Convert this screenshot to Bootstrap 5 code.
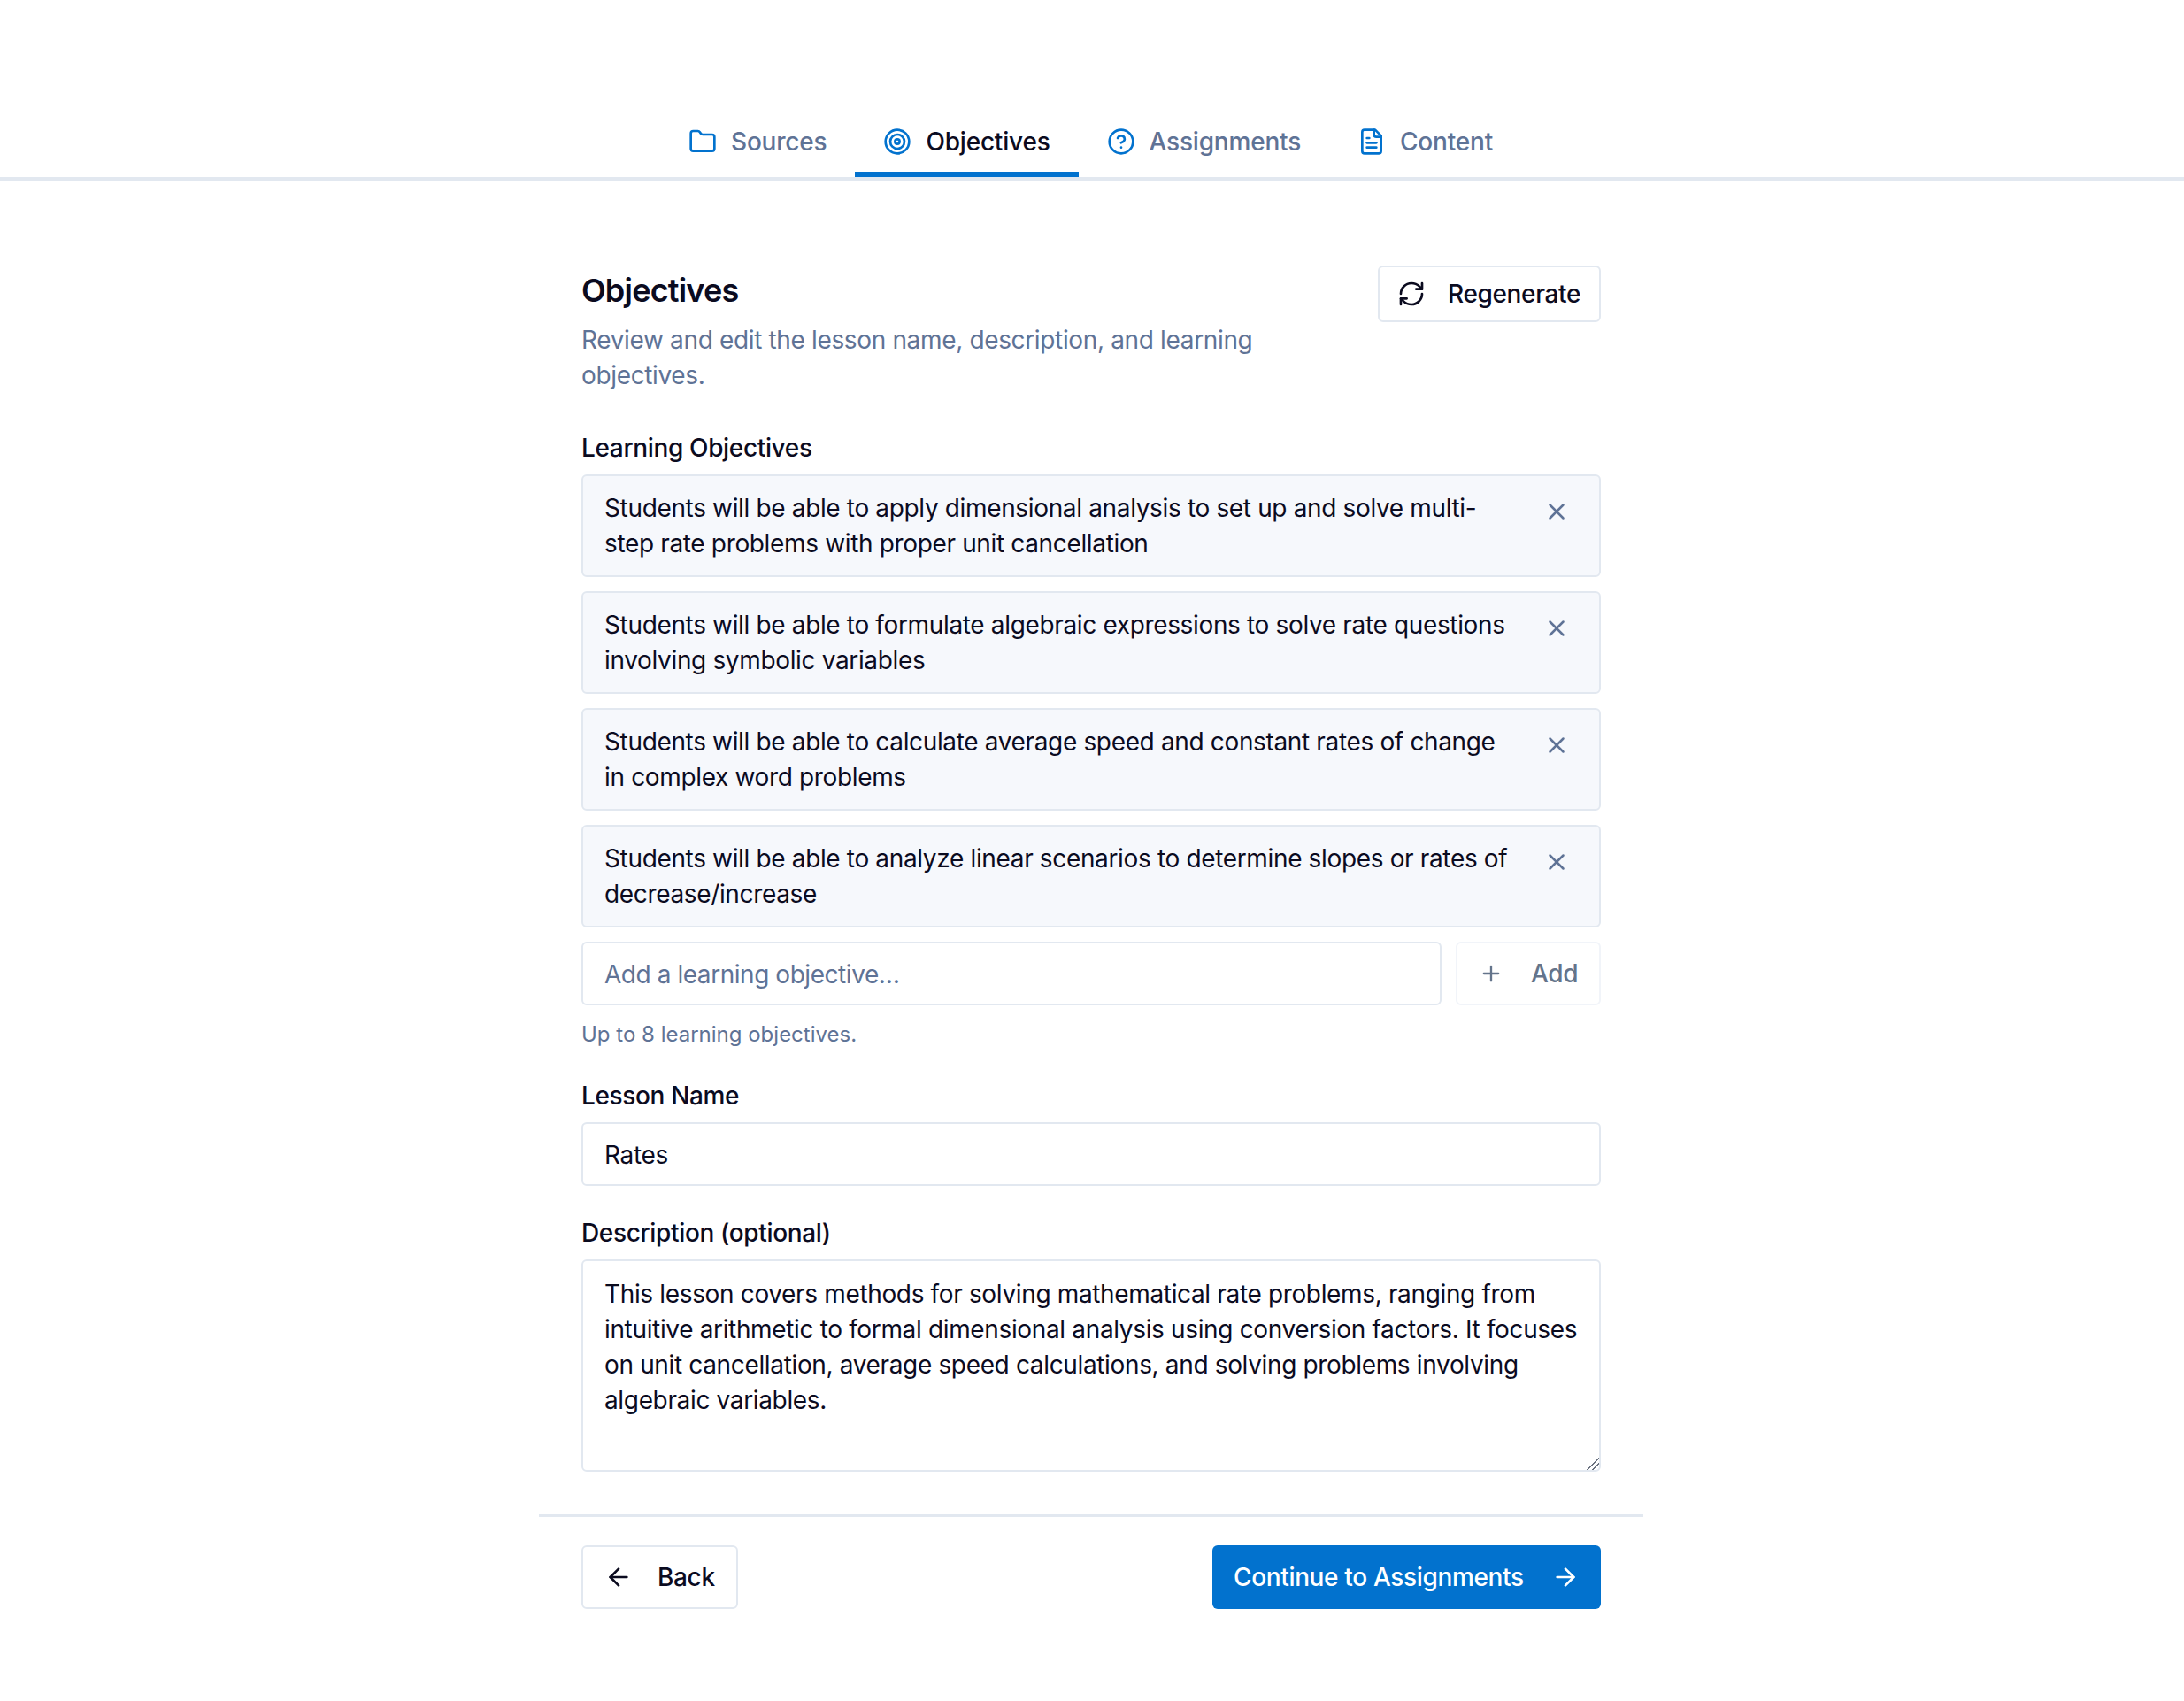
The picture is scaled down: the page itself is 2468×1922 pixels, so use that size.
<!DOCTYPE html>
<html lang="en">
<head>
  <meta charset="UTF-8">
  <title>Objectives</title>
  <meta name="viewport" content="width=device-width, initial-scale=1">
  <link href="https://cdn.jsdelivr.net/npm/bootstrap@5.3.3/dist/css/bootstrap.min.css" rel="stylesheet">
  <style>
    body {
      background: #fff;
      color: #0b0b1f;
      font-family: Inter, "Liberation Sans", sans-serif;
      font-size: 28px;
      line-height: 40px;
    }
    body, button, input, textarea { letter-spacing: -0.35px; }
    svg { fill: none; stroke: currentColor; stroke-width: 2; stroke-linecap: round; stroke-linejoin: round; flex-shrink: 0; }
    .tab-bar {
      margin-top: 120px;
      border-bottom: 4px solid #e2e8f0;
      height: 84px;
      padding-right: 3px;
    }
    .tab-item {
      color: #5f7396;
      padding: 20px 32px 0;
      height: 80px;
      gap: 16px;
      border-bottom: 6px solid transparent;
      font-weight: 500;
      letter-spacing: -0.2px;
      text-decoration: none;
    }
    .tab-item svg { color: #0272ce; width: 32px; height: 32px; margin-top: 4px; }
    .tab-item.on { color: #0b0b1f; border-bottom-color: #0272ce; }
    .page-body { width: 1248px; margin: 0 0 0 609px; padding: 96px 48px 0; }
    .page-title { font-size: 36px; line-height: 48px; font-weight: 600; letter-spacing: -0.8px; margin: 0 0 12px; padding-top: 4px; }
    .page-sub { color: #5f7396; width: 800px; margin: 0 0 42px; }
    .plain-btn {
      font-size: 28px;
      line-height: 40px;
      font-weight: 500;
      color: #0b0b1f;
      background: #fff;
      border: 2px solid #e2e8f0;
      border-radius: 6px;
      gap: 24px;
    }
    .regen-btn { height: 64px; padding: 0 20px; width: 252px; gap: 25px; }
    .regen-btn svg { width: 32px; height: 32px; }
    .field-label { font-weight: 500; display: block; margin: 0 0 10px; }
    .field-label.below { margin-top: 33px; margin-bottom: 10px; }
    .objective-row {
      background: #f6f8fc;
      border: 2px solid #e2e8f0;
      border-radius: 6px;
      padding: 16px 24px;
      gap: 24px;
    }
    .objective-row span { flex: 1; }
    .del-btn { color: #5f7396; background: none; border: 0; padding: 0; width: 48px; height: 48px; }
    .del-btn svg { width: 30px; height: 30px; }
    .form-control.text-field {
      font-size: 28px;
      line-height: 40px;
      color: #0b0b1f;
      height: 72px;
      padding: 15px 24px 13px;
      border: 2px solid #e2e8f0;
      border-radius: 6px;
    }
    .form-control.text-field::placeholder { color: #5f7396; letter-spacing: -0.45px; }
    textarea.form-control.text-field { height: 240px; padding-top: 17px; }
    textarea::-webkit-resizer {
      background: linear-gradient(135deg, transparent 52%, #6b7280 52%, #6b7280 58%, transparent 58%, transparent 72%, #6b7280 72%, #6b7280 78%, transparent 78%);
    }
    .add-btn { width: 164px; height: 72px; color: #64748b; border-color: #f1f4f9; padding: 0 24px; gap: 31px; }
    .add-btn svg { width: 28px; height: 28px; }
    .hint-text { color: #5f7396; font-size: 24px; line-height: 32px; letter-spacing: 0; margin: 17px 0 0; }
    .foot-line { width: 1248px; margin: 48px 0 0 609px; border-top: 3px solid #e2e8f0; }
    .foot-row { width: 1248px; margin: 0 0 0 609px; padding: 32px 48px; }
    .back-btn { height: 72px; width: 177px; padding: 0 24px; gap: 28px; }
    .back-btn svg, .next-btn svg { width: 32px; height: 32px; }
    .next-btn {
      height: 72px; width: 439px; padding: 0 24px;
      color: #fff; background: #0272ce; border: 0; border-radius: 6px;
      font-size: 28px; font-weight: 500; gap: 24px;
    }
  </style>
</head>
<body>
  <nav class="tab-bar d-flex justify-content-center">
    <a class="tab-item d-flex align-items-start" href="#">
      <svg viewBox="0 0 24 24"><path d="M20 20a2 2 0 0 0 2-2V8a2 2 0 0 0-2-2h-7.9a2 2 0 0 1-1.69-.9L9.6 3.9A2 2 0 0 0 7.93 3H4a2 2 0 0 0-2 2v13a2 2 0 0 0 2 2Z"/></svg>Sources
    </a>
    <a class="tab-item on d-flex align-items-start" href="#">
      <svg viewBox="0 0 24 24"><circle cx="12" cy="12" r="10"/><circle cx="12" cy="12" r="6"/><circle cx="12" cy="12" r="2"/></svg>Objectives
    </a>
    <a class="tab-item d-flex align-items-start" href="#">
      <svg viewBox="0 0 24 24"><circle cx="12" cy="12" r="10"/><path d="M9.09 9a3 3 0 0 1 5.83 1c0 2-3 3-3 3"/><path d="M12 17h.01"/></svg>Assignments
    </a>
    <a class="tab-item d-flex align-items-start" href="#">
      <svg viewBox="0 0 24 24"><path d="M15 2H6a2 2 0 0 0-2 2v16a2 2 0 0 0 2 2h12a2 2 0 0 0 2-2V7Z"/><path d="M14 2v4a2 2 0 0 0 2 2h4"/><path d="M10 9H8"/><path d="M16 13H8"/><path d="M16 17H8"/></svg>Content
    </a>
  </nav>

  <main class="page-body">
    <div class="d-flex justify-content-between align-items-start">
      <div>
        <h1 class="page-title">Objectives</h1>
        <p class="page-sub">Review and edit the lesson name, description, and learning objectives.</p>
      </div>
      <button class="plain-btn regen-btn d-flex align-items-center text-nowrap" type="button">
        <svg viewBox="0 0 24 24"><path d="M3 12a9 9 0 0 1 9-9 9.75 9.75 0 0 1 6.74 2.74L21 8"/><path d="M21 3v5h-5"/><path d="M21 12a9 9 0 0 1-9 9 9.75 9.75 0 0 1-6.74-2.74L3 16"/><path d="M8 16H3v5"/></svg>Regenerate
      </button>
    </div>

    <label class="field-label">Learning Objectives</label>
    <div class="d-flex flex-column gap-3" id="objectiveList"></div>

    <div class="d-flex gap-3 mt-3">
      <input class="form-control text-field" type="text" placeholder="Add a learning objective…">
      <button class="plain-btn add-btn d-flex align-items-center flex-shrink-0" type="button">
        <svg viewBox="0 0 24 24"><path d="M5 12h14"/><path d="M12 5v14"/></svg>Add
      </button>
    </div>
    <p class="hint-text">Up to 8 learning objectives.</p>

    <div>
      <label class="field-label below">Lesson Name</label>
      <input class="form-control text-field" type="text" value="Rates">
    </div>
    <div>
      <label class="field-label below">Description (optional)</label>
      <textarea class="form-control text-field">This lesson covers methods for solving mathematical rate problems, ranging from intuitive arithmetic to formal dimensional analysis using conversion factors. It focuses on unit cancellation, average speed calculations, and solving problems involving algebraic variables.</textarea>
    </div>
  </main>

  <div class="foot-line"></div>
  <div class="foot-row d-flex justify-content-between">
    <button class="plain-btn back-btn d-flex align-items-center" type="button">
      <svg viewBox="0 0 24 24"><path d="m12 19-7-7 7-7"/><path d="M19 12H5"/></svg>Back
    </button>
    <button class="next-btn d-flex align-items-center justify-content-between text-nowrap" type="button">
      Continue to Assignments
      <svg viewBox="0 0 24 24"><path d="M5 12h14"/><path d="m12 5 7 7-7 7"/></svg>
    </button>
  </div>

  <script src="https://cdn.jsdelivr.net/npm/bootstrap@5.3.3/dist/js/bootstrap.bundle.min.js"></script>
  <script>
    const objectives = [
      "Students will be able to apply dimensional analysis to set up and solve multi-step rate problems with proper unit cancellation",
      "Students will be able to formulate algebraic expressions to solve rate questions involving symbolic variables",
      "Students will be able to calculate average speed and constant rates of change in complex word problems",
      "Students will be able to analyze linear scenarios to determine slopes or rates of decrease/increase"
    ];
    const list = document.getElementById("objectiveList");
    objectives.forEach(text => {
      const row = document.createElement("div");
      row.className = "objective-row d-flex align-items-start";
      row.innerHTML = `<span>${text}</span><button class="del-btn d-flex align-items-center justify-content-center" type="button"><svg viewBox="0 0 24 24"><path d="M18 6 6 18"/><path d="m6 6 12 12"/></svg></button>`;
      list.appendChild(row);
    });
  </script>
</body>
</html>
